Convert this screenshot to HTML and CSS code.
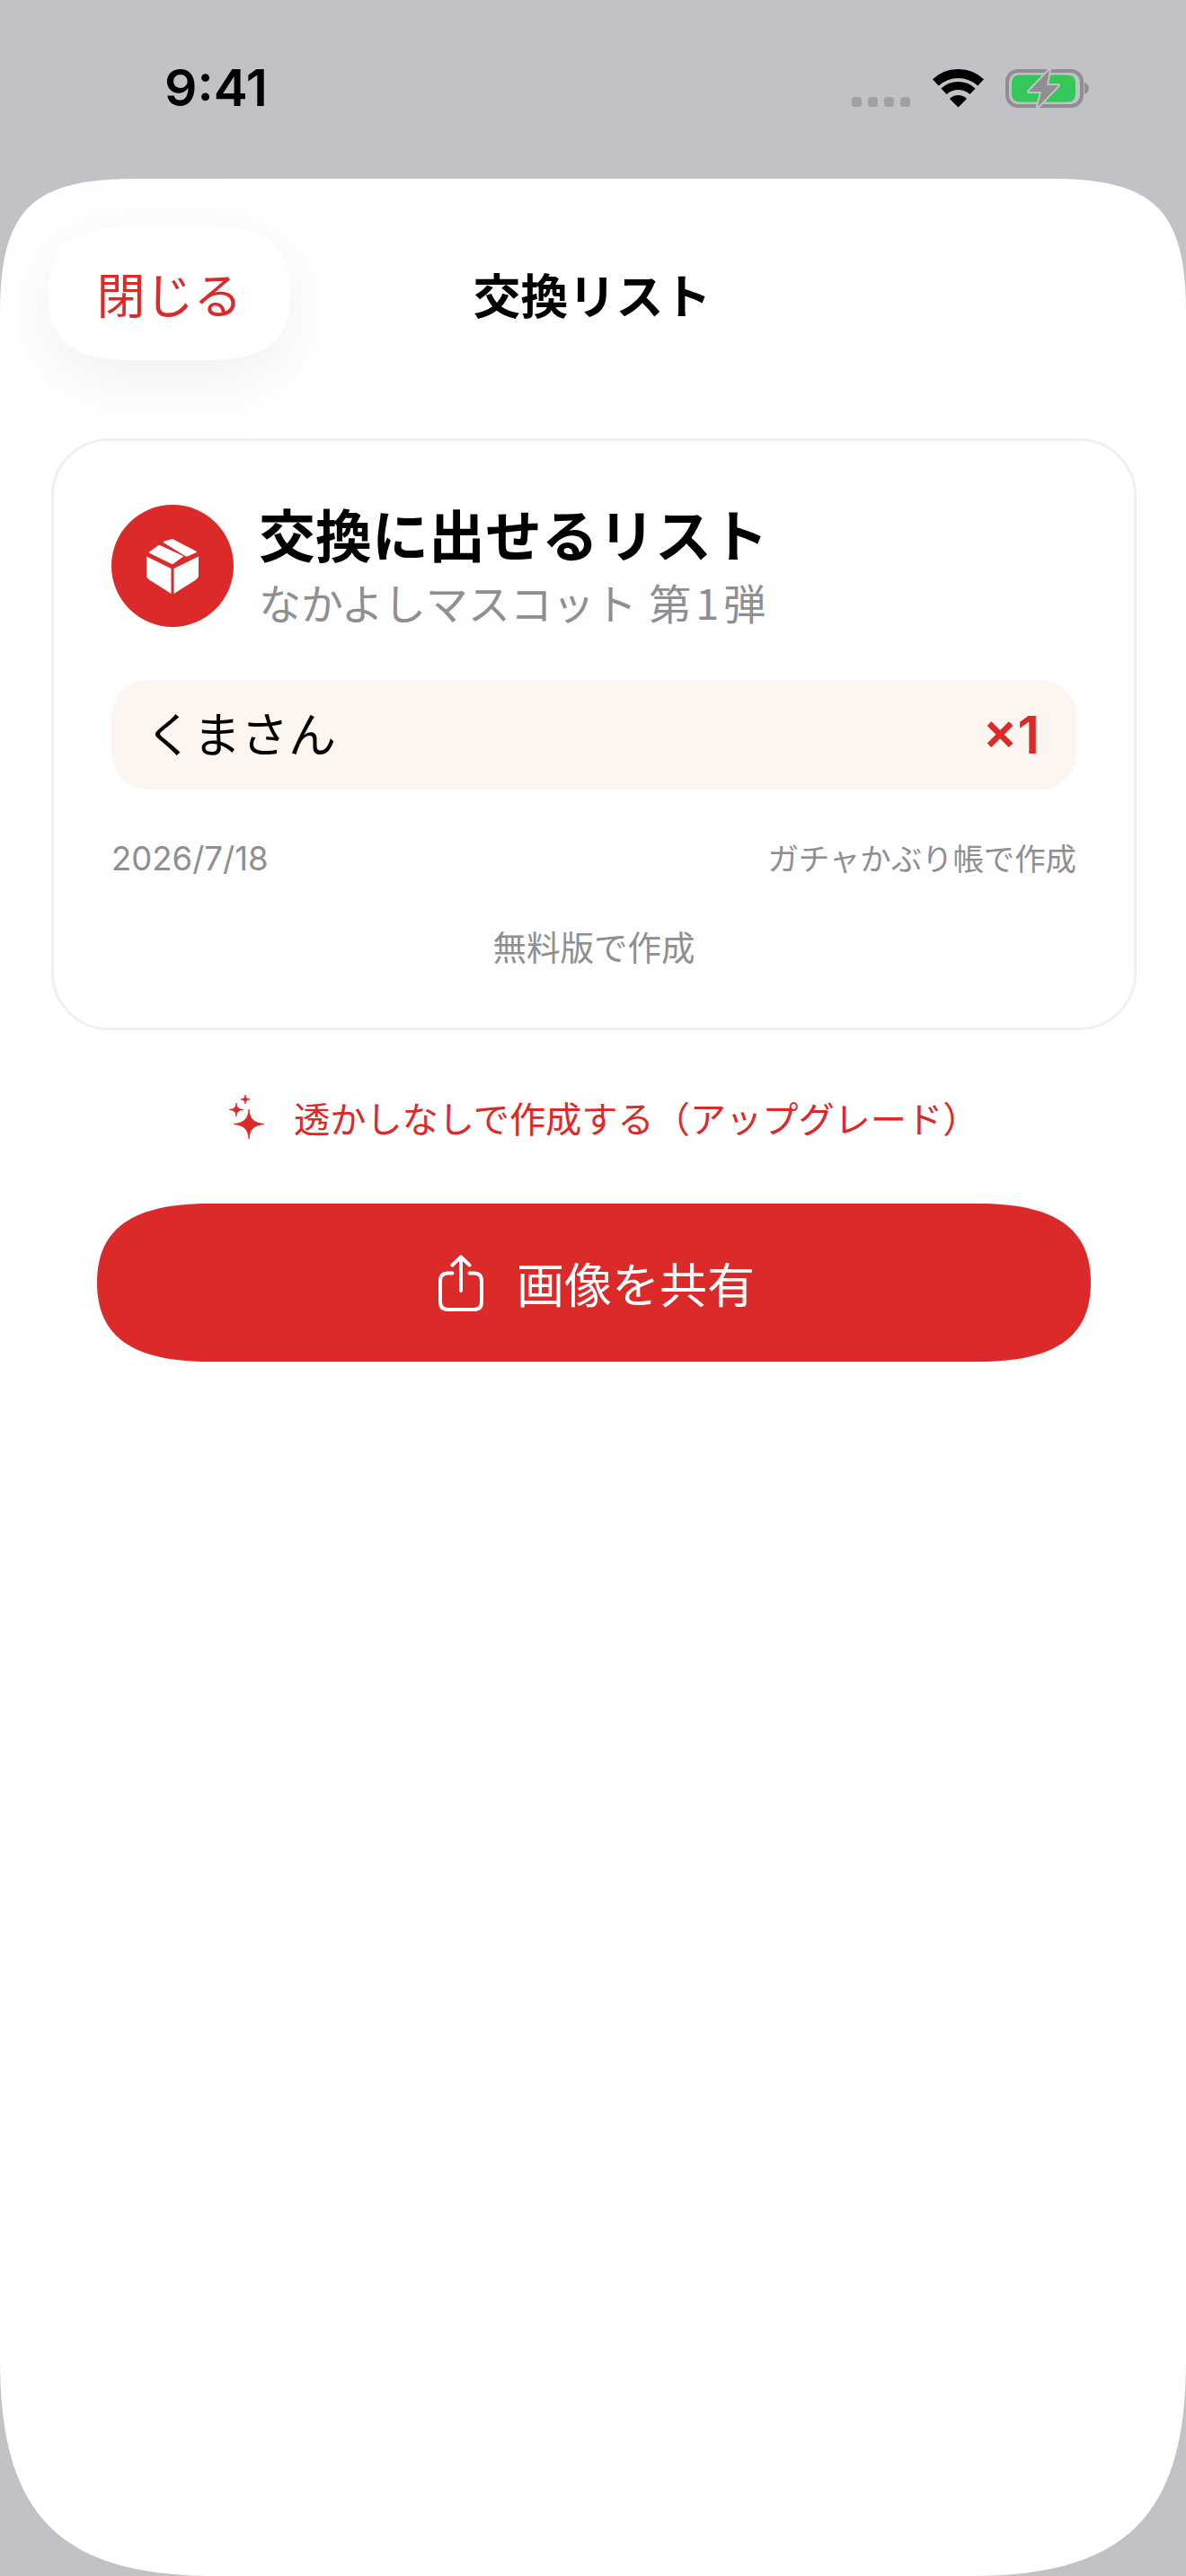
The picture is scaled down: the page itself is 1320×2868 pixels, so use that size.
FILE: index.html
```html
<!DOCTYPE html>
<html lang="ja">
<head>
  <meta charset="UTF-8">
  <meta name="viewport" content="width=device-width, initial-scale=1.0">
  <title>交換リスト</title>
  <link rel="stylesheet" href="styles.css">
</head>
<body>
  <!-- Status bar -->
  <div class="status-bar">
    <span class="status-time">9:41</span>
    <div class="status-icons">
      <svg class="status-dots" width="65" height="11" viewBox="0 0 65 11">
        <rect x="0" width="11" height="11" rx="3.5"/>
        <rect x="18" width="11" height="11" rx="3.5"/>
        <rect x="36" width="11" height="11" rx="3.5"/>
        <rect x="54" width="11" height="11" rx="3.5"/>
      </svg>
      <svg class="status-wifi" width="57" height="43" viewBox="0 0 57 43">
        <path d="M3.3 14.9A37 37 0 0 1 53.7 14.9" fill="none" stroke="#000" stroke-width="10"/>
        <path d="M12.5 24.8A23.5 23.5 0 0 1 44.5 24.8" fill="none" stroke="#000" stroke-width="9"/>
        <path d="M28.5 42.5L19 33A13.4 13.4 0 0 1 38 33Z" fill="#000"/>
      </svg>
      <svg class="status-battery" width="93" height="43" viewBox="0 0 93 43">
        <rect x="2" y="2" width="83" height="39" rx="12" fill="none" stroke="#8e8e93" stroke-width="4"/>
        <rect x="7" y="6.500" width="71" height="30" rx="8" fill="#34c759"/>
        <path d="M88 15C91 16 93 18.500 93 21.500C93 24.500 91 27 88 28Z" fill="#8e8e93"/>
        <path d="M49 1L26 25H40L36 42L59 18H46Z" fill="#8e8e93" stroke="#c2c1c6" stroke-width="4" stroke-linejoin="round" paint-order="stroke"/>
      </svg>
    </div>
  </div>

  <!-- Sheet -->
  <main class="sheet">
    <header class="sheet-header">
      <div class="close-wrap">
        <a href="#" class="close-btn">閉じる</a>
      </div>
      <h1 class="sheet-title">交換リスト</h1>
    </header>

    <section class="card">
      <div class="card-head">
        <div class="card-icon">
          <svg width="58" height="61" viewBox="0 0 58 61" fill="#fff">
            <path d="M19.500 3.500L29 .8L55 14.500L44.500 19Z" stroke="#fff" stroke-width="1.500" stroke-linejoin="round"/>
            <path d="M3.500 15L14 7.500L40 19.500L29 27.500Z" stroke="#fff" stroke-width="1.500" stroke-linejoin="round"/>
            <path d="M0 19.500L27.500 33V61L3 45.500Q0 43.500 0 41Z"/>
            <path d="M58 19.500L30.500 33V61L55 45.500Q58 43.500 58 41Z"/>
          </svg>
        </div>
        <div class="card-heading">
          <h2 class="card-title">交換に出せるリスト</h2>
          <p class="card-subtitle">なかよしマスコット <span class="card-series">第1弾</span></p>
        </div>
      </div>

      <div class="item-row">
        <span class="item-name">くまさん</span>
        <span class="item-count">×1</span>
      </div>

      <div class="card-meta">
        <span class="meta-date">2026/7/18</span>
        <span class="meta-source">ガチャかぶり帳で作成</span>
      </div>
      <p class="card-note">無料版で作成</p>
    </section>

    <a href="#" class="upgrade-link">
      <svg width="39" height="49" viewBox="0 0 39 49" fill="#dc2a2a" stroke="#dc2a2a" stroke-width="0.8" stroke-linejoin="round">
        <path d="M22 16C23 27 27 31 39 32.500C27 34 23 38 22 49C21 38 17 34 5 32.500C17 31 21 27 22 16Z"/>
        <path d="M8 9C8.500 14 10 15.800 16 16.500C10 17.200 8.500 19 8 24C7.500 19 6 17.200 0 16.500C6 15.800 7.500 14 8 9Z"/>
        <path d="M18 0C18.400 3.300 19.500 4.500 23 5C19.500 5.500 18.400 6.700 18 10C17.600 6.700 16.500 5.500 13 5C16.500 4.500 17.600 3.300 18 0Z"/>
      </svg>
      <span class="upgrade-text">透かしなしで作成する（アップグレード）</span>
    </a>

    <a href="#" class="share-btn">
      <svg width="50" height="63" viewBox="0 0 50 63" fill="none" stroke="#fff" stroke-width="4" stroke-linecap="round" stroke-linejoin="round">
        <path d="M15.500 20.500H10.500Q2 20.500 2 29V52.500Q2 61 10.500 61H39.500Q48 61 48 52.500V29Q48 20.500 39.500 20.500H34.500"/>
        <path d="M25 2.500V40"/>
        <path d="M15.500 11.500L25 2.500L34.500 11.500"/>
      </svg>
      <span>画像を共有</span>
    </a>
  </main>
</body>
</html>
```

FILE: styles.css
```css
:root {
  --red: #dc2a2a;
  --gray-text: #8e8e93;
  --sheet-bg: #c2c1c6;
}

* {
  margin: 0;
  padding: 0;
  box-sizing: border-box;
  font-family: "Noto Sans CJK JP", "Inter", sans-serif;
}

body {
  width: 1320px;
  height: 2868px;
  overflow: hidden;
  background: var(--sheet-bg);
}

a {
  text-decoration: none;
}

/* Status bar */
.status-bar {
  height: 199px;
  display: flex;
  justify-content: space-between;
  align-items: flex-start;
  padding: 77px 108px 0 183px;
}

.status-time {
  font-family: "Inter", sans-serif;
  font-size: 57px;
  font-weight: 600;
  line-height: 42px;
  color: #000;
}

.status-icons {
  display: flex;
  align-items: flex-end;
  gap: 25px;
  height: 43px;
}

.status-dots {
  fill: #a1a1a4;
  margin-bottom: 1px;
}

.status-battery {
  overflow: visible;
  margin-left: -1px;
}

/* Sheet: iOS continuous corners, border-radius is too round here */
.sheet {
  height: 2669px;
  background: #fff;
  clip-path: path("M0 150C0 35 35 0 150 0H1170C1285 0 1320 35 1320 150V2429C1320 2602 1253 2669 1080 2669H240C67 2669 0 2602 0 2429Z");
}

.sheet-header {
  display: grid;
  grid-template-columns: 1fr auto 1fr;
  align-items: center;
  padding: 53px 54px 0;
}

.close-wrap {
  width: 269px;
  filter: drop-shadow(0 20px 40px rgba(0, 0, 0, 0.06));
}

.close-btn {
  height: 149px;
  display: flex;
  justify-content: center;
  align-items: center;
  background: #fff;
  color: var(--red);
  font-size: 54px;
  clip-path: path("M0 74.500C0 15 35 0 95 0H174C234 0 269 15 269 74.500C269 134 234 149 174 149H95C35 149 0 134 0 74.500Z");
}

.sheet-title {
  font-size: 53px;
  font-weight: 700;
  color: #000;
  margin-left: -2px;
}

/* Card */
.card {
  margin: 87px 55px 0 57px;
  padding: 71px 64px 66px;
  border: 3px solid #f0f0f0;
  border-radius: 64px;
}

.card-head {
  height: 136px;
  display: flex;
  align-items: center;
  gap: 28px;
}

.card-icon {
  width: 136px;
  height: 136px;
  flex-shrink: 0;
  display: flex;
  justify-content: center;
  align-items: center;
  border-radius: 50%;
  background: var(--red);
}

.card-heading {
  margin-bottom: 6px;
}

.card-title {
  font-size: 63px;
  font-weight: 700;
  line-height: 86px;
  color: #000;
}

.card-subtitle {
  font-size: 47px;
  line-height: 68px;
  color: var(--gray-text);
}

.card-series {
  margin-left: 3px;
  letter-spacing: 5px;
}

.item-row {
  height: 122px;
  margin-top: 59px;
  padding: 0 41px 0 38px;
  display: flex;
  justify-content: space-between;
  align-items: center;
  border-radius: 40px;
  background: #fdf6f0;
}

.item-name {
  font-size: 53px;
  line-height: 60px;
  margin-bottom: 6px;
  color: #000;
}

.item-count {
  font-family: "Inter", sans-serif;
  font-size: 58px;
  font-weight: 600;
  color: var(--red);
}

.card-meta {
  margin-top: 52px;
  display: flex;
  justify-content: space-between;
  align-items: flex-start;
  font-size: 34.4px;
  line-height: 50px;
  color: var(--gray-text);
}

.meta-date {
  font-family: "Inter", sans-serif;
  font-size: 36.5px;
}

.meta-source {
  line-height: 46px;
}

.card-note {
  margin-top: 47px;
  text-align: center;
  font-size: 37.5px;
  line-height: 50px;
  color: var(--gray-text);
}

/* Upgrade link and share button */
.upgrade-link {
  margin-top: 72px;
  padding-left: 255px;
  display: flex;
  align-items: center;
  gap: 33px;
  color: var(--red);
  font-size: 40.2px;
  line-height: 46px;
}

.share-btn {
  width: 1106px;
  height: 176px;
  margin: 72px 0 0 108px;
  padding-left: 6px;
  display: flex;
  justify-content: center;
  align-items: center;
  gap: 37px;
  background: var(--red);
  color: #fff;
  font-size: 53px;
  clip-path: path("M0 88C0 26 42 0 125 0H981C1064 0 1106 26 1106 88C1106 150 1064 176 981 176H125C42 176 0 150 0 88Z");
}
```
